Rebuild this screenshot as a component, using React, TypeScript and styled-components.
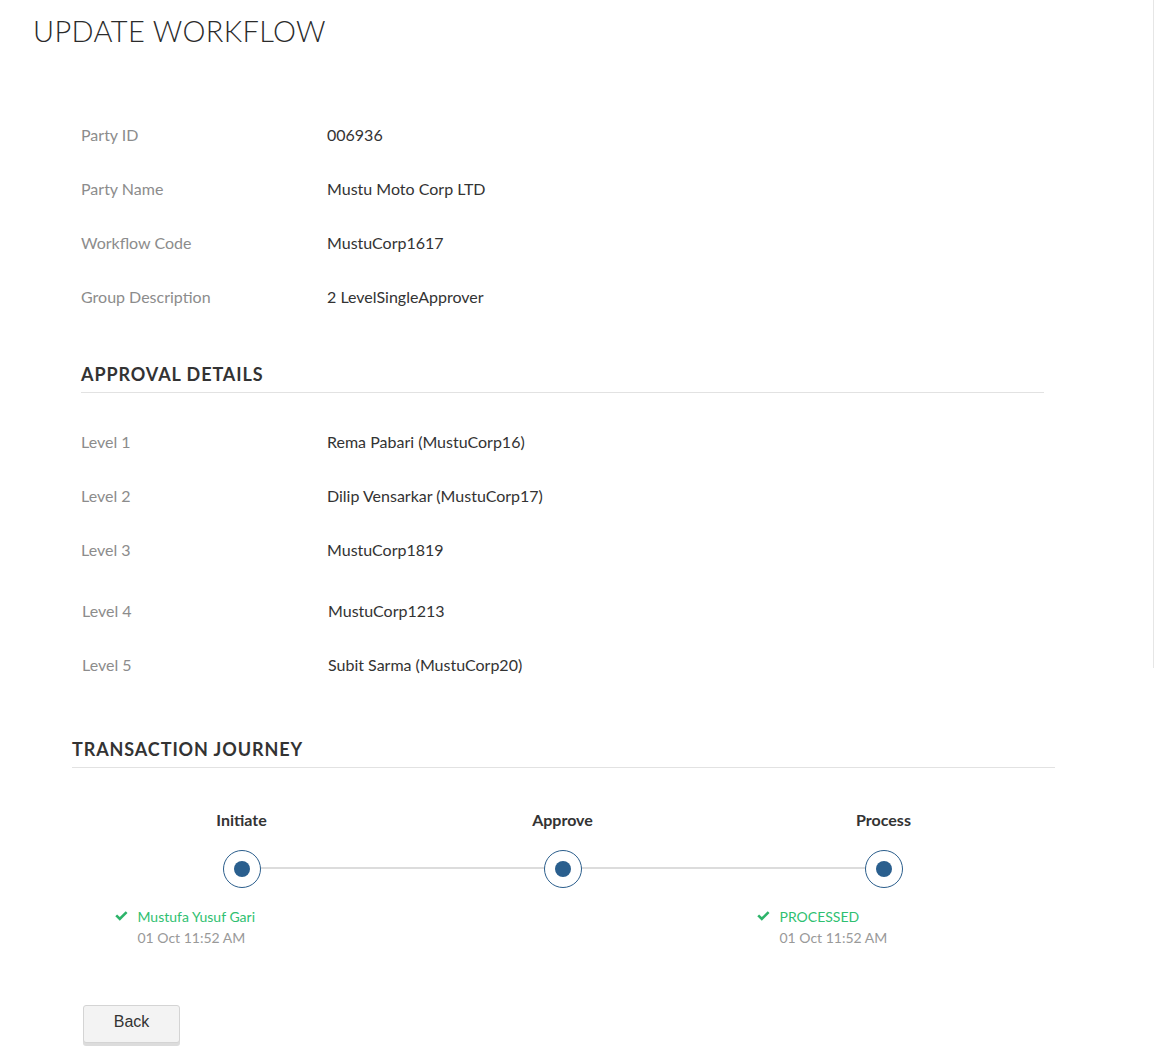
import React from 'react'
import styled, { createGlobalStyle } from 'styled-components'

const GlobalStyle = createGlobalStyle`
  html, body {
    margin: 0;
    padding: 0;
    background: #fff;
  }
  body {
    font-family: Lato, "Open Sans", "Liberation Sans", sans-serif;
    color: #333;
  }
`

const Frame = styled.div`
  display: flex;
  width: 1154px;
  min-height: 1051px;
`

const Main = styled.div`
  flex: 1;
  display: flex;
  flex-direction: column;
`

const Edge = styled.div`
  width: 1px;
  height: 668px;
  background: #e6e6e6;
`

const Title = styled.h1`
  margin: 0;
  padding: 13px 0 0 33px;
  font-size: 29px;
  line-height: 36px;
  font-weight: 300;
  letter-spacing: 0.35px;
  color: #2b2b2b;
`

const Section = styled.div<{ $left: number; $top: number }>`
  margin-left: ${p => p.$left}px;
  margin-top: ${p => p.$top}px;
  width: 963px;
`

const Row = styled.div<{ $shift?: number; $gap?: number }>`
  display: grid;
  grid-template-columns: 246px 1fr;
  height: 54px;
  align-items: center;
  font-size: 16px;
  margin-top: ${p => p.$gap || 0}px;
  padding-left: ${p => p.$shift || 0}px;
`

const Label = styled.span`
  color: #8c8c8c;
`

const Value = styled.span`
  color: #333;
`

const Heading = styled.h2<{ $width: number; $after?: number }>`
  margin: 0 0 ${p => p.$after || 0}px;
  width: ${p => p.$width}px;
  font-size: 18px;
  line-height: 22px;
  font-weight: 700;
  letter-spacing: 0.9px;
  color: #333;
  padding-bottom: 7px;
  border-bottom: 1px solid #e2e2e2;
`

const Journey = styled.div`
  position: relative;
  display: grid;
  grid-template-columns: repeat(3, 1fr);
  width: 963px;
  margin-left: 81px;
  margin-top: 42px;
`

const Track = styled.div`
  position: absolute;
  left: 160px;
  right: 160px;
  top: 57px;
  height: 2px;
  background: #dcdcdc;
`

const Step = styled.div`
  position: relative;
  display: flex;
  flex-direction: column;
  align-items: center;
`

const StepName = styled.div`
  font-size: 16px;
  line-height: 20px;
  font-weight: 700;
  color: #333;
`

const Ring = styled.div`
  margin-top: 20px;
  width: 36px;
  height: 36px;
  border: 1px solid #2b5e8c;
  border-radius: 50%;
  background: #fff;
  display: flex;
  align-items: center;
  justify-content: center;
`

const Dot = styled.div`
  width: 16px;
  height: 16px;
  border-radius: 50%;
  background: #2a5f8e;
`

const Status = styled.div`
  align-self: flex-start;
  margin-left: calc(50% - 127px);
  margin-top: 18px;
  display: grid;
  grid-template-columns: 23px auto;
  font-size: 14px;
  line-height: 21px;
  min-height: 42px;
`

const Who = styled.span`
  color: #2fbf71;
`

const When = styled.span`
  grid-column: 2;
  color: #999;
`

const Check = styled.svg`
  width: 13px;
  height: 10px;
  margin-top: 5px;
  fill: #2db46a;
`

const BackButton = styled.button`
  margin: 57px 0 0 83px;
  width: 97px;
  height: 38px;
  background: #f3f3f3;
  border: 1px solid #d4d4d4;
  border-radius: 3px;
  box-shadow: 0 3px 0 #dcdcdc;
  font-family: "Liberation Sans", Arial, sans-serif;
  font-size: 16px;
  color: #333;
  padding: 0 0 4px;
`

const partyInfo = [
  ['Party ID', '006936'],
  ['Party Name', 'Mustu Moto Corp LTD'],
  ['Workflow Code', 'MustuCorp1617'],
  ['Group Description', '2 LevelSingleApprover'],
]

const levels = [
  ['Level 1', 'Rema Pabari (MustuCorp16)'],
  ['Level 2', 'Dilip Vensarkar (MustuCorp17)'],
  ['Level 3', 'MustuCorp1819'],
  ['Level 4', 'MustuCorp1213'],
  ['Level 5', 'Subit Sarma (MustuCorp20)'],
]

type StepItem = { name: string; who?: string; when?: string }

const steps: StepItem[] = [
  { name: 'Initiate', who: 'Mustufa Yusuf Gari', when: '01 Oct 11:52 AM' },
  { name: 'Approve' },
  { name: 'Process', who: 'PROCESSED', when: '01 Oct 11:52 AM' },
]

const CheckIcon = () => (
  <Check viewBox="0 0 13 10">
    <path d="M0.3 5.2 L2.1 3.4 L4.8 6.1 L10.7 0.3 L12.5 2.1 L4.8 9.7 Z" />
  </Check>
)

export default function App() {
  return (
    <Frame>
      <GlobalStyle />
      <Main>
        <Title>UPDATE WORKFLOW</Title>

        <Section $left={81} $top={58}>
          {partyInfo.map(([label, value]) => (
            <Row key={label}>
              <Label>{label}</Label>
              <Value>{value}</Value>
            </Row>
          ))}
        </Section>

        <Section $left={81} $top={40}>
          <Heading $width={963} $after={21}>APPROVAL DETAILS</Heading>
          {levels.map(([label, value], i) => (
            <Row key={label} $gap={i === 3 ? 7 : 0} $shift={i >= 3 ? 1 : 0}>
              <Label>{label}</Label>
              <Value>{value}</Value>
            </Row>
          ))}
        </Section>

        <Section $left={72} $top={47}>
          <Heading $width={983}>TRANSACTION JOURNEY</Heading>
        </Section>

        <Journey>
          <Track />
          {steps.map(step => (
            <Step key={step.name}>
              <StepName>{step.name}</StepName>
              <Ring>
                <Dot />
              </Ring>
              <Status>
                {step.who && (
                  <>
                    <CheckIcon />
                    <Who>{step.who}</Who>
                    <When>{step.when}</When>
                  </>
                )}
              </Status>
            </Step>
          ))}
        </Journey>

        <div>
          <BackButton>Back</BackButton>
        </div>
      </Main>
      <Edge />
    </Frame>
  )
}
